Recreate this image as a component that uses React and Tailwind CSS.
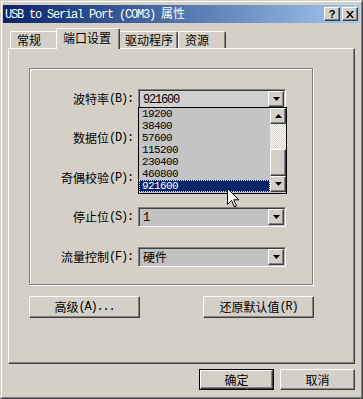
import React from "react";

const ASCII = "font-['Liberation_Mono',monospace] text-[12px] tracking-[-1.2px]";
const CJK = "font-['Noto_Sans_CJK_SC',sans-serif] text-[12px]";
const DIGITS = "font-['Liberation_Mono',monospace] text-[11px] tracking-[-0.6px] leading-[11px]";

// split mixed text so latin runs get half-width mono, like SimSun
const Txt = ({ children }) => (
  <>
    {(children.match(/[\x00-\xff]+|[^\x00-\xff]+/g) || []).map((run, i) => (
      <span key={i} className={/[\x00-\xff]/.test(run[0]) ? ASCII : CJK}>
        {run}
      </span>
    ))}
  </>
);

const raised =
  "border border-t-white border-l-white border-r-[#404040] border-b-[#404040] shadow-[inset_-1px_-1px_0_#808080]";
const sunken =
  "border border-t-[#808080] border-l-[#808080] border-r-white border-b-white shadow-[inset_1px_1px_0_#404040]";

const Arrow = ({ up }) => (
  <svg width="7" height="4" viewBox="0 0 7 4">
    <polygon points={up ? "3.5,0 7,4 0,4" : "0,0 7,0 3.5,4"} fill="#000" />
  </svg>
);

const ArrowBtn = ({ up, className = "" }) => (
  <div className={`flex items-center justify-center w-[16px] h-[16px] bg-[#d4d0c8] ${raised} ${className}`}>
    <Arrow up={up} />
  </div>
);

const Combo = ({ value, bg }) => (
  <div className={`flex items-center w-[148px] h-[20px] ${bg} ${sunken} p-[1px]`}>
    <div className="flex-1 pl-[3px] leading-[12px] whitespace-pre">
      <Txt>{value}</Txt>
    </div>
    <ArrowBtn />
  </div>
);

const BAUDS = ["19200", "38400", "57600", "115200", "230400", "460800", "921600"];

const DropList = () => (
  <div className="absolute left-0 top-[18px] z-20 flex w-[149px] h-[87px] border border-black bg-[#c4c4c4]">
    <div className="flex-1 flex flex-col">
      {BAUDS.map((b) => (
        <div
          key={b}
          className={
            b === "921600"
              ? "flex items-center h-[12px] pl-[2px] bg-[#0a246a] text-white border border-dotted border-[#e8e0a0]"
              : "flex items-center h-[12px] pl-[3px]"
          }
        >
          <span className={DIGITS}>{b}</span>
        </div>
      ))}
    </div>
    <div className="flex flex-col w-[16px]">
      <ArrowBtn up />
      <div className="h-[25px] bg-[repeating-conic-gradient(#ffffff_0%_25%,#d4d0c8_0%_50%)] bg-[length:2px_2px]" />
      <div className={`h-[27px] bg-[#d4d0c8] ${raised}`} />
      <ArrowBtn />
    </div>
    <svg className="absolute left-[88px] top-[80px]" width="13" height="20" viewBox="0 0 13 20">
      <path
        d="M0.5 0.5 L0.5 16.5 L4.5 12.5 L7.5 19 L9.5 18 L6.8 11.8 L11.8 11.8 Z"
        fill="#fff"
        stroke="#000"
        strokeWidth="1"
      />
    </svg>
  </div>
);

const Row = ({ label, value = "", mt, bg = "bg-[#cbcbcb]", open }) => (
  <div className={`flex items-center h-[20px] ${mt}`}>
    <div className="w-[103px] flex justify-end leading-[12px] whitespace-pre">
      <Txt>{label}</Txt>
    </div>
    <div className="relative ml-[5px]">
      <Combo value={value} bg={bg} />
      {open && <DropList />}
    </div>
  </div>
);

const Button = ({ children, className = "" }) => (
  <div className={`flex items-center justify-center bg-[#d4d0c8] leading-[12px] ${raised} ${className}`}>
    <Txt>{children}</Txt>
  </div>
);

const Tab = ({ children, active, w }) => (
  <div
    className={
      active
        ? `relative z-10 -mx-[2px] -mb-[1px] h-[21px] ${w} pl-[6px] pt-[2px] leading-[14px] bg-[#d4d0c8] border-l border-t border-white border-r border-r-[#404040] rounded-tl-[2px] rounded-tr-[2px] shadow-[inset_-1px_0_0_#808080]`
        : `h-[17px] ${w} pl-[6px] pt-[1px] leading-[14px] bg-[#d4d0c8] border-l border-t border-white border-r border-r-[#404040] rounded-tl-[2px] rounded-tr-[2px] shadow-[inset_-1px_0_0_#808080]`
    }
  >
    <Txt>{children}</Txt>
  </div>
);

export default function App() {
  return (
    <div className="w-[363px] h-[399px] bg-[#d4d0c8] text-black font-['Noto_Sans_CJK_SC',sans-serif] text-[12px] border border-t-[#d4d0c8] border-l-[#d4d0c8] border-r-[#404040] border-b-[#404040]">
      <div className="h-full border border-t-white border-l-white border-r-[#808080] border-b-[#808080] px-[1px] pt-[3px] pb-[1px] flex flex-col">
        {/* TITLE BAR */}
        <div className="flex items-center h-[18px] pl-[2px] pr-[2px] bg-gradient-to-r from-[#0a246a] to-[#a6caf0] text-white">
          <div className="flex-1 whitespace-pre leading-[14px]">
            <Txt>USB to Serial Port (COM3) 属性</Txt>
          </div>
          <div className={`flex items-center justify-center w-[16px] h-[14px] bg-[#d4d0c8] text-black ${raised}`}>
            <span className="font-['Liberation_Sans',sans-serif] font-bold text-[11px] leading-[11px]">?</span>
          </div>
          <div className={`ml-[2px] flex items-center justify-center w-[16px] h-[14px] bg-[#d4d0c8] ${raised}`}>
            <svg width="8" height="7" viewBox="0 0 8 7">
              <path d="M0 0h2l2 2.5L6 0h2L5 3.5 8 7H6L4 4.5 2 7H0l3-3.5z" fill="#000" />
            </svg>
          </div>
        </div>

        <div className="flex flex-col px-[5px]">
          {/* TABS */}
          <div className="flex items-end h-[20px] mt-[5px] pl-[2px]">
            <Tab w="w-[48px]">常规</Tab>
            <Tab w="w-[64px]" active>端口设置</Tab>
            <Tab w="w-[60px]">驱动程序</Tab>
            <Tab w="w-[48px]">资源</Tab>
          </div>

          {/* TAB PAGE */}
          <div className="h-[316px] border-l border-t border-white border-r border-b border-r-[#404040] border-b-[#404040] shadow-[inset_-1px_-1px_0_#808080] pl-[20px] pt-[19px]">
            <div className="w-[284px] h-[217px] border border-[#808080] shadow-[inset_1px_1px_0_#fff,1px_1px_0_#fff] pt-[20px]">
              <Row label="波特率(B):" value="921600" mt="mt-0" bg="bg-[#d0d0d0]" open />
              <Row label="数据位(D):" mt="mt-[19px]" />
              <Row label="奇偶校验(P):" mt="mt-[20px]" />
              <Row label="停止位(S):" value="1" mt="mt-[19px]" bg="bg-[#c2c2c2]" />
              <Row label="流量控制(F):" value="硬件" mt="mt-[20px]" bg="bg-[#c2c2c2]" />
            </div>
            <div className="flex w-[285px] justify-between mt-[11px]">
              <Button className="w-[111px] h-[22px]">高级(A)...</Button>
              <Button className="w-[111px] h-[22px]">还原默认值(R)</Button>
            </div>
          </div>

          {/* DIALOG BUTTONS */}
          <div className="flex justify-end gap-[6px] mt-[5px]">
            <div className="w-[75px] h-[21px] border border-black">
              <Button className="w-full h-full">确定</Button>
            </div>
            <Button className="w-[75px] h-[21px]">取消</Button>
          </div>
        </div>
      </div>
    </div>
  );
}
